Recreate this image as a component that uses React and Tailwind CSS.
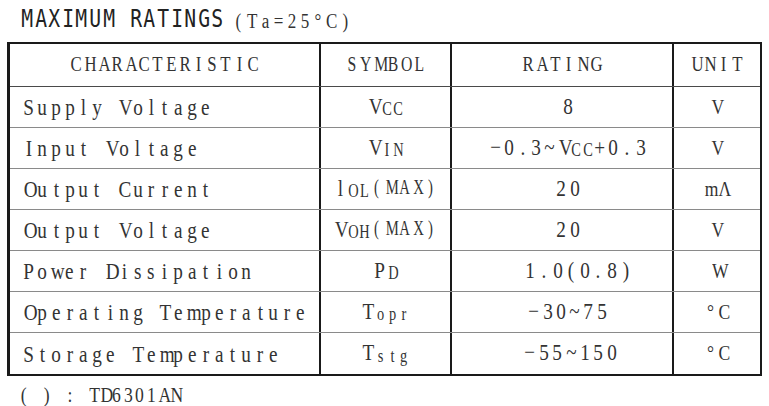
import React from "react";

// fixed-pitch cells with narrowed glyphs, like the typewriter face in the scan
const Mono = ({ text, cell = "w-[13.6px]", squeeze = "scale-x-[0.8]" }) =>
  text.split("").map((c, i) => (
    <span key={i} className={`inline-block text-center ${cell}`}>
      <span className={`inline-block ${squeeze}`}>
        {c === " " ? "\u00a0" : c}
      </span>
    </span>
  ));

const Sub = ({ text }) => (
  <span className="relative top-[4px] text-[18px]">
    <Mono text={text} cell="w-[11.5px]" />
  </span>
);

const Max = () => (
  <span className="text-[21px]">
    <Mono text="(MAX)" cell="w-[13.6px]" squeeze="scale-x-[0.7]" />
  </span>
);

const rows = [
  {
    name: "Supply Voltage",
    symbol: (
      <>
        <Mono text="V" />
        <Sub text="CC" />
      </>
    ),
    rating: <Mono text="8" />,
    unit: "V",
  },
  {
    name: "Input Voltage",
    symbol: (
      <>
        <Mono text="V" />
        <Sub text="IN" />
      </>
    ),
    rating: (
      <>
        <Mono text="−0.3~V" />
        <Sub text="CC" />
        <Mono text="+0.3" />
      </>
    ),
    unit: "V",
  },
  {
    name: "Output Current",
    symbol: (
      <>
        <Mono text="l" />
        <Sub text="OL" />
        <Max />
      </>
    ),
    rating: <Mono text="20" />,
    unit: "mΛ",
  },
  {
    name: "Output Voltage",
    symbol: (
      <>
        <Mono text="V" />
        <Sub text="OH" />
        <Max />
      </>
    ),
    rating: <Mono text="20" />,
    unit: "V",
  },
  {
    name: "Power Dissipation",
    symbol: (
      <>
        <Mono text="P" />
        <Sub text="D" />
      </>
    ),
    rating: (
      <span className="pl-[20px]">
        <Mono text="1.0(0.8)" />
      </span>
    ),
    unit: "W",
  },
  {
    name: "Operating Temperature",
    symbol: (
      <>
        <Mono text="T" />
        <Sub text="opr" />
      </>
    ),
    rating: <Mono text="−30~75" />,
    unit: "°C",
  },
  {
    name: "Storage Temperature",
    symbol: (
      <>
        <Mono text="T" />
        <Sub text="stg" />
      </>
    ),
    rating: (
      <span className="pl-[6px]">
        <Mono text="−55~150" />
      </span>
    ),
    unit: "°C",
  },
];

export default function App() {
  return (
    <div
      className="w-[769px] h-[406px] bg-white text-[#333] overflow-hidden"
      style={{ fontFamily: '"Liberation Serif", serif' }}
    >
      {/* title */}
      <div className="h-[42px] pl-[20px] pb-[4px] flex items-center">
        <span
          className="text-[24px] text-[#222]"
          style={{ fontFamily: '"DejaVu Sans Mono", monospace' }}
        >
          <Mono text="MAXIMUM RATINGS" squeeze="scale-x-[0.82]" />
        </span>
        <span className="text-[20px] ml-[8px] mt-[3px]">
          <Mono text="(Ta=25°C)" cell="w-[13.3px]" squeeze="scale-x-[0.85]" />
        </span>
      </div>

      {/* table */}
      <div className="ml-[7px] w-[755px] border-2 border-l-[3px] border-[#1a1a1a] text-[24px]">
        <div className="grid grid-cols-[311px_131px_222px_86px] h-[43px] border-b border-[#4a4a4a] text-[21px]">
          <div className="border-r-2 border-[#1a1a1a] flex items-center justify-center">
            <Mono text="CHARACTERISTIC" />
          </div>
          <div className="border-r-2 border-[#1a1a1a] flex items-center justify-center">
            <Mono text="SYMBOL" squeeze="scale-x-[0.75]" />
          </div>
          <div className="border-r-2 border-[#1a1a1a] flex items-center justify-center">
            <Mono text="RATING" />
          </div>
          <div className="flex items-center justify-center">
            <Mono text="UNIT" />
          </div>
        </div>
        {rows.map((r, i) => (
          <div
            key={i}
            className={`grid grid-cols-[311px_131px_222px_86px] h-[41px] ${
              i < rows.length - 1 ? "border-b border-[#8a8a8a]" : ""
            }`}
          >
            <div className="border-r-2 border-[#1a1a1a] flex items-center pl-[12px]">
              <Mono text={r.name} />
            </div>
            <div className="border-r-2 border-[#1a1a1a] flex items-center justify-center pb-[3px]">
              {r.symbol}
            </div>
            <div className="border-r-2 border-[#1a1a1a] flex items-center justify-center pl-[12px] pb-[3px]">
              {r.rating}
            </div>
            <div className="flex items-center justify-center pb-[2px] text-[22px]">
              <Mono text={r.unit} cell="w-[14px]" />
            </div>
          </div>
        ))}
      </div>

      {/* footnote */}
      <div className="pl-[18px] pt-[2px] text-[22px]">
        <Mono text="( ) : TD6301AN" cell="w-[11.6px]" />
      </div>
    </div>
  );
}
